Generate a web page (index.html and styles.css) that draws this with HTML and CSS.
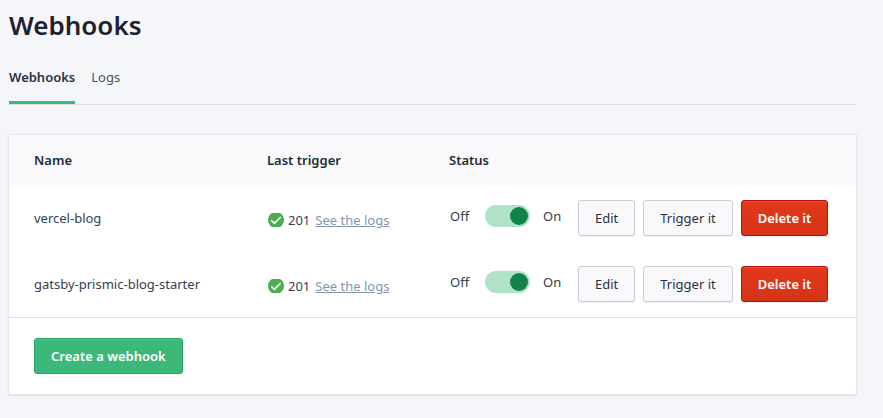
FILE: index.html
```html
<!DOCTYPE html>
<html lang="en">
<head>
<meta charset="utf-8">
<meta name="viewport" content="width=device-width, initial-scale=1">
<title>Webhooks</title>
<link rel="stylesheet" href="styles.css">
</head>
<body>
<svg class="sprite" aria-hidden="true">
  <symbol id="check" viewBox="0 1 16 14">
    <circle cx="8" cy="8" r="8" fill="#4cae50"/>
    <path d="M3.3 8.2l3.1 3.1 6.3-6.3" fill="none" stroke="#fff" stroke-width="1.6"/>
  </symbol>
</svg>
<main class="page">
  <h1 class="title">Webhooks</h1>
  <nav class="tabs">
    <a class="tab tab-active" href="#webhooks" aria-current="page">Webhooks</a>
    <a class="tab" href="#logs">Logs</a>
  </nav>
  <section class="card">
    <table class="hooks">
      <colgroup>
        <col>
        <col class="col-trigger">
        <col class="col-status">
        <col class="col-actions">
      </colgroup>
      <thead>
        <tr><th>Name</th><th>Last trigger</th><th>Status</th><td></td></tr>
      </thead>
      <tbody>
        <tr>
          <td>vercel-blog</td>
          <td>
            <div class="trigger">
              <svg class="check" aria-hidden="true"><use href="#check"/></svg>
              <span>201</span>
              <a class="logs-link" href="#logs">See the logs</a>
            </div>
          </td>
          <td>
            <label class="switch"><span>Off</span><input type="checkbox" role="switch" class="toggle" checked><span>On</span></label>
          </td>
          <td>
            <div class="actions">
              <button type="button" class="btn">Edit</button>
              <button type="button" class="btn">Trigger it</button>
              <button type="button" class="btn btn-danger">Delete it</button>
            </div>
          </td>
        </tr>
        <tr>
          <td>gatsby-prismic-blog-starter</td>
          <td>
            <div class="trigger">
              <svg class="check" aria-hidden="true"><use href="#check"/></svg>
              <span>201</span>
              <a class="logs-link" href="#logs">See the logs</a>
            </div>
          </td>
          <td>
            <label class="switch"><span>Off</span><input type="checkbox" role="switch" class="toggle" checked><span>On</span></label>
          </td>
          <td>
            <div class="actions">
              <button type="button" class="btn">Edit</button>
              <button type="button" class="btn">Trigger it</button>
              <button type="button" class="btn btn-danger">Delete it</button>
            </div>
          </td>
        </tr>
      </tbody>
    </table>
    <footer class="card-footer">
      <button type="button" class="btn btn-primary">Create a webhook</button>
    </footer>
  </section>
</main>
</body>
</html>
```

FILE: styles.css
```css
* {
  box-sizing: border-box;
}

body {
  margin: 0;
  background: #f5f6fa;
  color: #363e4e;
  font: 13px/20px "Noto Sans", sans-serif;
}

.sprite {
  position: absolute;
  width: 0;
  height: 0;
}

.page {
  padding: 8px 27px 24px 9px;
}

.title {
  margin: 0;
  color: #1d2230;
  font-size: 26px;
  line-height: 34px;
  font-weight: 600;
}

.tabs {
  display: flex;
  gap: 16px;
  margin-top: 24px;
  border-bottom: 1px solid #dcdee3;
}

.tab {
  padding: 1px 0 14px;
  border-bottom: 3px solid transparent;
  color: #4d5361;
  text-decoration: none;
}

.tab-active {
  border-bottom-color: #3cb878;
  color: #2b303d;
  font-weight: 600;
}

.card {
  margin-top: 30px;
  background: #fff;
  box-shadow: 0 0 0 1px #e6e7ea, 0 1px 2px 1px #e0e2e7;
}

.hooks {
  width: 100%;
  table-layout: fixed;
  border-collapse: collapse;
}

.col-trigger {
  width: 182px;
}

.col-status {
  width: 129px;
}

.col-actions {
  width: 278px;
}

.hooks th,
.hooks td {
  height: 66px;
  padding: 0;
  text-align: left;
  vertical-align: middle;
}

.hooks th:first-child,
.hooks td:first-child {
  padding-left: 25px;
}

.hooks thead {
  background: #f9f9fb;
}

.hooks thead th,
.hooks thead td {
  height: 50px;
  color: #262b38;
  font-weight: 600;
}

.trigger {
  display: flex;
  align-items: center;
  padding: 4px 0 0 1px;
}

.check {
  width: 16px;
  height: 14px;
  margin-right: 4px;
}

.logs-link {
  margin-left: 5px;
  color: #8496ae;
}

.switch {
  display: flex;
  align-items: center;
  padding: 0 0 4px 1px;
}

.toggle {
  appearance: none;
  display: flex;
  align-items: center;
  width: 45px;
  height: 22px;
  margin: 0 13px 0 16px;
  padding: 0 2px;
  border-radius: 11px;
  background: #b0e2c9;
}

.toggle::before {
  content: "";
  width: 18px;
  height: 18px;
  border-radius: 50%;
  background: #11834a;
}

.toggle:checked {
  justify-content: flex-end;
}

.actions {
  display: flex;
  gap: 8px;
}

.btn {
  height: 36px;
  padding: 0 16px;
  border: 1px solid #c8cdd6;
  border-radius: 3px;
  background: #f9f9fc;
  box-shadow: 0 1px 1px #eceef1;
  color: #2b303d;
  font: inherit;
  white-space: nowrap;
}

.btn-danger {
  border-color: #bd0f12;
  background: linear-gradient(#e2371a, #d63418);
  box-shadow: inset 0 1px 0 #e74c31, 0 1px 1px #eceef1;
  color: #fff;
  font-weight: 600;
}

.btn-primary {
  border-color: #2ba566;
  background: #3cb87a;
  box-shadow: inset 0 1px 0 #4cc187;
  color: #fff;
  font-weight: 600;
}

.card-footer {
  padding: 20px 25px;
  border-top: 1px solid #dcdee1;
}
```
